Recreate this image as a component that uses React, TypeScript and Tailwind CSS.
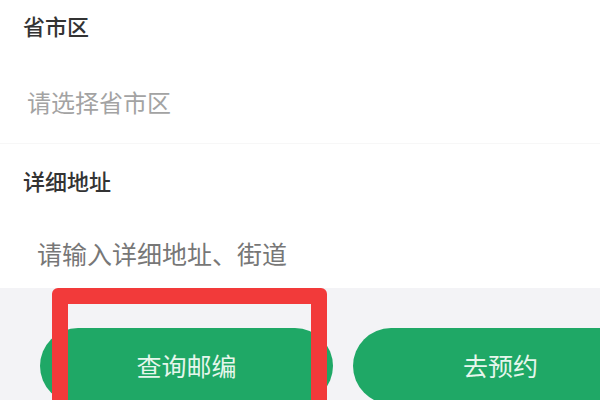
export default function App() {
  return (
    <div
      className="relative w-[600px] h-[400px] overflow-hidden bg-[#f3f3f6]"
      style={{ fontFamily: '"Noto Sans CJK SC", "Noto Sans", sans-serif' }}
    >
      <div className="bg-white h-[143px] pl-[23px] pt-[14px]">
        <div className="text-[22px] leading-[22px] font-medium text-[#333]">省市区</div>
        <div className="mt-[53px] pl-[4px] text-[24px] leading-[25px] text-[#a3a3a3]">请选择省市区</div>
      </div>
      <div className="h-[1px] bg-[#f7f7f7]" />
      <div className="bg-white h-[144px] pl-[23px] pt-[25px]">
        <div className="text-[22px] leading-[22px] font-medium text-[#333]">详细地址</div>
        <div className="mt-[50px] pl-[14px] text-[25px] leading-[25px] text-[#777]">请输入详细地址、街道</div>
      </div>
      <div className="flex gap-[20px] pl-[40px] pt-[40px]">
        <div className="w-[293px] h-[76px] shrink-0 rounded-full bg-[#1fa866] flex items-center justify-center text-[25px] text-[#e6f6ec]">
          查询邮编
        </div>
        <div className="w-[295px] h-[76px] shrink-0 rounded-full bg-[#1fa866] flex items-center justify-center text-[25px] text-[#e6f6ec]">
          去预约
        </div>
      </div>
      <div className="absolute left-[52px] top-[288px] w-[275px] h-[140px] border-[16px] border-[#f23a3a] rounded-[6px]" />
    </div>
  );
}
